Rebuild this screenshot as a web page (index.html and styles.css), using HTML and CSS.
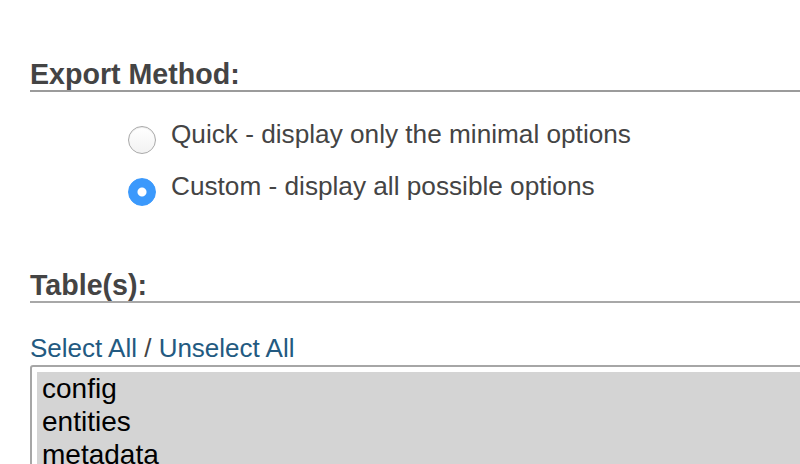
FILE: index.html
```html
<!DOCTYPE html>
<html lang="en">

<head>
    <meta charset="UTF-8">
    <meta name="viewport" content="width=device-width, initial-scale=1.0">
    <title>Export</title>
    <link rel="stylesheet" href="styles.css">
</head>

<body>
    <div id="export-page">
        <div class="export-section" id="export-method">
            <h3>Export Method:</h3>
            <ul class="radio-list">
                <li>
                    <input type="radio" name="quick_or_custom" id="radio_quick">
                    <label for="radio_quick">Quick - display only the minimal options</label>
                </li>
                <li>
                    <input type="radio" name="quick_or_custom" id="radio_custom" checked>
                    <label for="radio_custom">Custom - display all possible options</label>
                </li>
            </ul>
        </div>

        <div class="export-section" id="export-tables">
            <h3>Table(s):</h3>
            <p class="select-links"><a href="#">Select All</a> / <a href="#">Unselect All</a></p>
            <div class="table-select">
                <div class="table-option">config</div>
                <div class="table-option">entities</div>
                <div class="table-option">metadata</div>
            </div>
        </div>
    </div>
</body>

</html>
```

FILE: styles.css
```css
body {
    font-family: 'Liberation Sans', Arial, sans-serif;
    margin: 0;
    overflow: hidden;
    background: #fff;
    color: #444;
}

#export-page {
    padding: 58px 0 0 30px;
}

.export-section h3 {
    margin: 0;
    font-size: 28.6px;
    line-height: 32px;
    font-weight: bold;
    color: #444;
    border-bottom: 2px solid #9b9b9b;
}

#export-tables {
    margin-top: 63px;
}

#export-tables h3 {
    border-bottom-color: #a8a8a8;
}

.radio-list {
    list-style: none;
    margin: 28px 0 0 98px;
    padding: 0;
}

.radio-list li {
    display: flex;
    align-items: flex-start;
    margin-bottom: 18px;
}

.radio-list li:last-child {
    margin-bottom: 0;
}

.radio-list input {
    appearance: none;
    -webkit-appearance: none;
    box-sizing: border-box;
    width: 28px;
    height: 28px;
    margin: 6px 15px 0 0;
    border: 1px solid #aaa;
    border-radius: 50%;
    background: linear-gradient(to bottom, #fff, #f2f2f2);
    box-shadow: inset 0 1px 1px rgba(0, 0, 0, 0.08);
}

.radio-list input:checked {
    border-color: #3b99fc;
    background: radial-gradient(circle, #fff 4px, #3b99fc 5px);
    box-shadow: none;
}

.radio-list label {
    font-size: 26.2px;
    line-height: 28px;
    color: #444;
}

.select-links {
    margin: 30px 0 0;
    font-size: 26px;
    line-height: 30px;
    color: #444;
}

.select-links a {
    color: #235a81;
    text-decoration: none;
}

.table-select {
    width: 900px;
    height: 200px;
    margin-top: 2px;
    padding: 5px;
    border: 2px solid #a6a6a6;
    border-radius: 3px;
    background: #fff;
}

.table-option {
    padding-left: 5px;
    font-size: 28px;
    line-height: 33px;
    color: #000;
    background: #d4d4d4;
}
```
